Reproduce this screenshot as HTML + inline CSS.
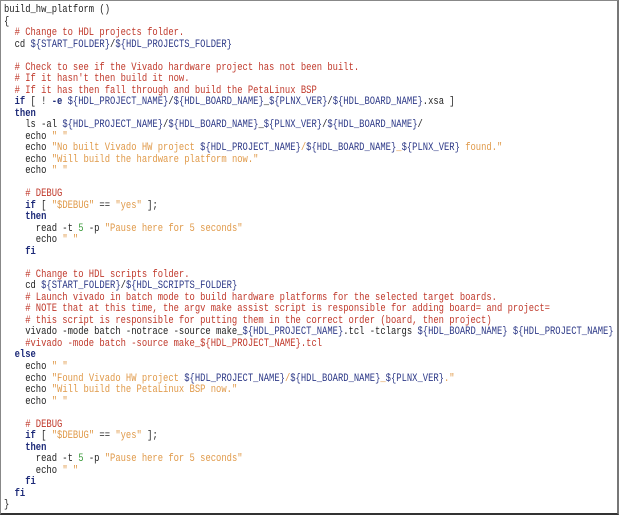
<!DOCTYPE html>
<html><head><style>
html,body{margin:0;padding:0;background:#fff;}
.f{position:absolute;left:0;top:0;width:616px;height:512px;border:1px solid #888;border-bottom:2px solid #333;border-right:2px solid #777;background:#fff;overflow:hidden;}
pre{position:absolute;left:3px;top:4px;margin:0;font-family:"Liberation Mono",monospace;font-size:11px;line-height:11.52px;color:#222;transform:scaleX(0.803);transform-origin:0 0;}
.c{color:#c0392b}.k{color:#1d2a78;font-weight:bold}.v{color:#2e3a88}.s{color:#e09a4a}.n{color:#3a9a3a}
</style></head><body><div class="f"><pre>build_hw_platform ()
{
  <span class="c"># Change to HDL projects folder.</span>
  cd <span class="v">${START_FOLDER}</span>/<span class="v">${HDL_PROJECTS_FOLDER}</span>

  <span class="c"># Check to see if the Vivado hardware project has not been built.</span>
  <span class="c"># If it hasn't then build it now.</span>
  <span class="c"># If it has then fall through and build the PetaLinux BSP</span>
  <span class="k">if</span> [ ! <span class="k">-e</span> <span class="v">${HDL_PROJECT_NAME}</span>/<span class="v">${HDL_BOARD_NAME}</span>_<span class="v">${PLNX_VER}</span>/<span class="v">${HDL_BOARD_NAME}</span>.xsa ]
  <span class="k">then</span>
    ls -al <span class="v">${HDL_PROJECT_NAME}</span>/<span class="v">${HDL_BOARD_NAME}</span>_<span class="v">${PLNX_VER}</span>/<span class="v">${HDL_BOARD_NAME}</span>/
    echo <span class="s">" "</span>
    echo <span class="s">"No built Vivado HW project </span><span class="v">${HDL_PROJECT_NAME}</span><span class="s">/</span><span class="v">${HDL_BOARD_NAME}</span><span class="s">_</span><span class="v">${PLNX_VER}</span><span class="s"> found."</span>
    echo <span class="s">"Will build the hardware platform now."</span>
    echo <span class="s">" "</span>

    <span class="c"># DEBUG</span>
    <span class="k">if</span> [ <span class="s">"$DEBUG"</span> == <span class="s">"yes"</span> ];
    <span class="k">then</span>
      read -t <span class="n">5</span> -p <span class="s">"Pause here for 5 seconds"</span>
      echo <span class="s">" "</span>
    <span class="k">fi</span>

    <span class="c"># Change to HDL scripts folder.</span>
    cd <span class="v">${START_FOLDER}</span>/<span class="v">${HDL_SCRIPTS_FOLDER}</span>
    <span class="c"># Launch vivado in batch mode to build hardware platforms for the selected target boards.</span>
    <span class="c"># NOTE that at this time, the argv make assist script is responsible for adding board= and project=</span>
    <span class="c"># this script is responsible for putting them in the correct order (board, then project)</span>
    vivado -mode batch -notrace -source make_<span class="v">${HDL_PROJECT_NAME}</span>.tcl -tclargs <span class="v">${HDL_BOARD_NAME}</span> <span class="v">${HDL_PROJECT_NAME}</span>
    <span class="c">#vivado -mode batch -source make_${HDL_PROJECT_NAME}.tcl</span>
  <span class="k">else</span>
    echo <span class="s">" "</span>
    echo <span class="s">"Found Vivado HW project </span><span class="v">${HDL_PROJECT_NAME}</span><span class="s">/</span><span class="v">${HDL_BOARD_NAME}</span><span class="s">_</span><span class="v">${PLNX_VER}</span><span class="s">."</span>
    echo <span class="s">"Will build the PetaLinux BSP now."</span>
    echo <span class="s">" "</span>

    <span class="c"># DEBUG</span>
    <span class="k">if</span> [ <span class="s">"$DEBUG"</span> == <span class="s">"yes"</span> ];
    <span class="k">then</span>
      read -t <span class="n">5</span> -p <span class="s">"Pause here for 5 seconds"</span>
      echo <span class="s">" "</span>
    <span class="k">fi</span>
  <span class="k">fi</span>
}</pre></div></body></html>
